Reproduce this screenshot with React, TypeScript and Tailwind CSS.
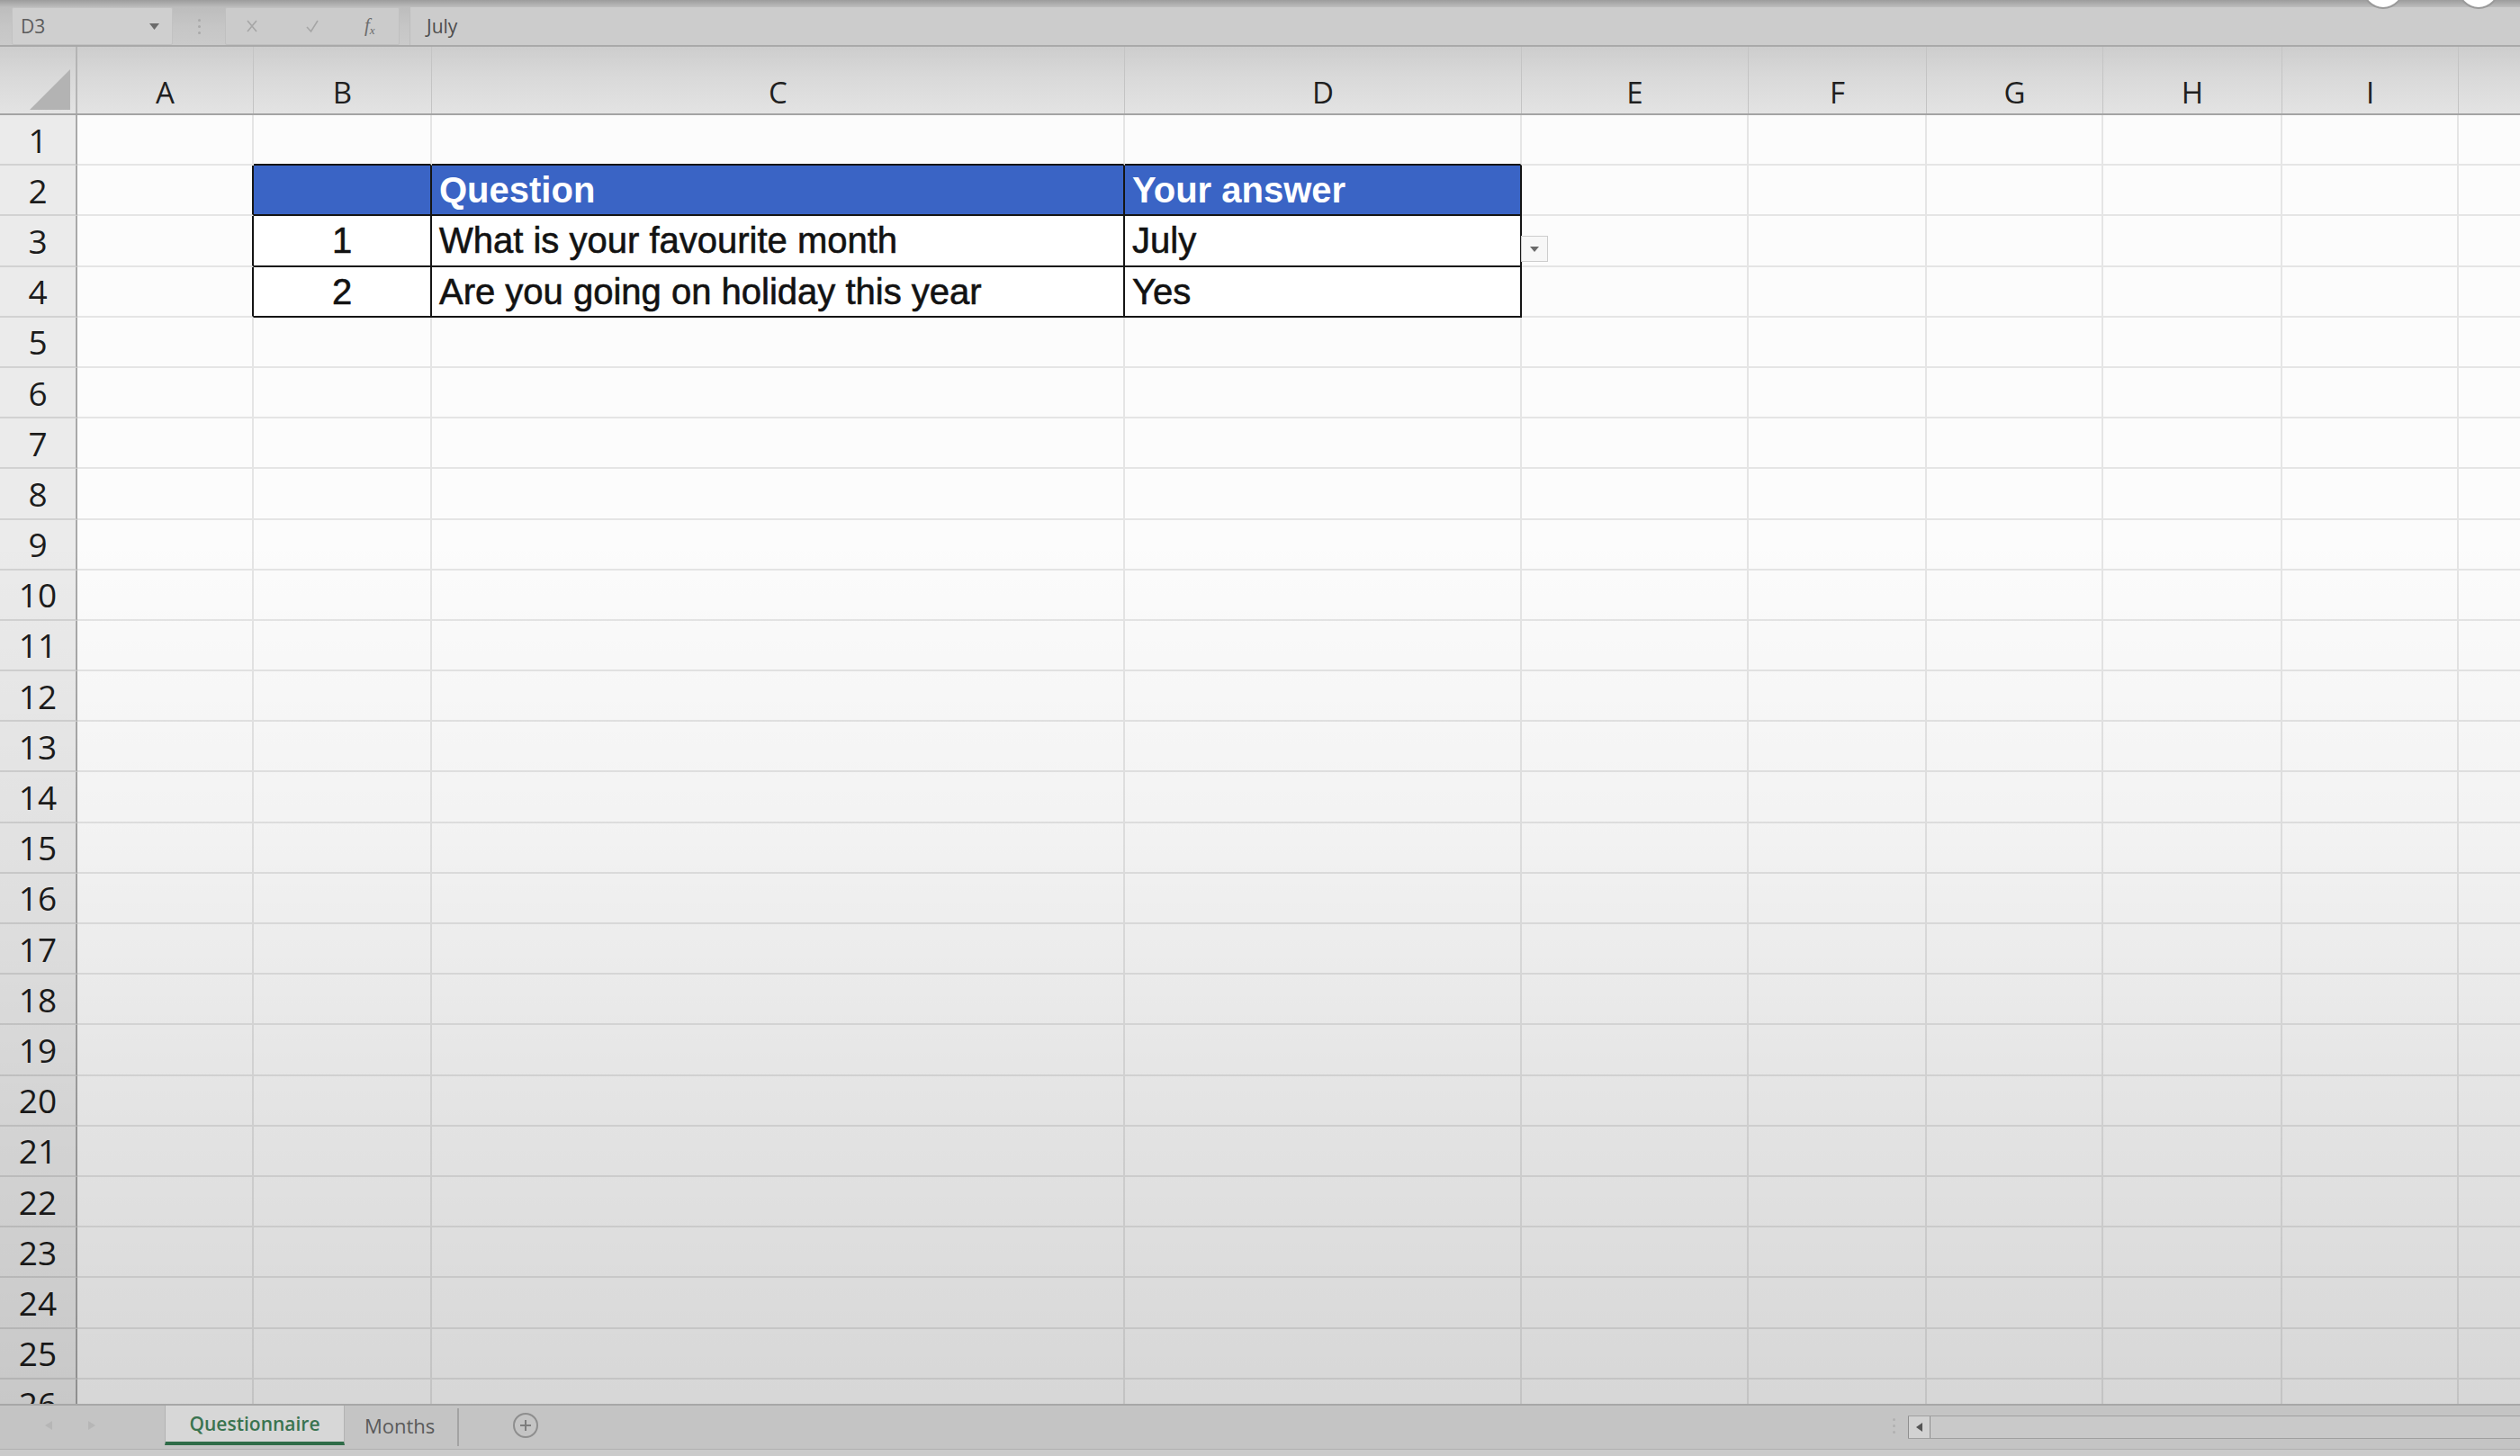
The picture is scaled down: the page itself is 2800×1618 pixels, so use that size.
import React from "react";

const GRID =
  "grid grid-cols-[86px_196px_198px_770px_441px_252px_198px_196px_199px_196px_196px]";
const LETTERS = ["A", "B", "C", "D", "E", "F", "G", "H", "I", "J"];
const ROWS = Array.from({ length: 26 }, (_, i) => i + 1);

// keys are "row-col", col 0 = A
type Kind = "head" | "num" | "body";
const TABLE: Record<string, { text: string; kind: Kind }> = {
  "2-1": { text: "", kind: "head" },
  "2-2": { text: "Question", kind: "head" },
  "2-3": { text: "Your answer", kind: "head" },
  "3-1": { text: "1", kind: "num" },
  "3-2": { text: "What is your favourite month", kind: "body" },
  "3-3": { text: "July", kind: "body" },
  "4-1": { text: "2", kind: "num" },
  "4-2": { text: "Are you going on holiday this year", kind: "body" },
  "4-3": { text: "Yes", kind: "body" },
};

function borders(r: number, c: number) {
  const inTable = r >= 2 && r <= 4 && c >= 1 && c <= 3;
  const right =
    inTable || (c === 0 && r >= 2 && r <= 4) ? "border-r-[#151515]" : "border-r-black/[0.09]";
  const bottom =
    inTable || (r === 1 && c >= 1 && c <= 3) ? "border-b-[#151515]" : "border-b-black/[0.09]";
  return `border-r-2 border-b-2 ${right} ${bottom}`;
}

function FormulaBar() {
  return (
    <div className="h-[52px] shrink-0 flex items-start pt-[8px] border-b-2 border-[#a9a9a9] bg-[linear-gradient(to_bottom,#9c9c9c_0px,#bdbdbd_8px,#c6c6c6_30px,#cacaca_100%)] font-['Open_Sans',sans-serif]">
      <div className="ml-[13px] w-[179px] h-[42px] flex items-center justify-between pl-[9px] pr-[14px] bg-[#cfcfcf] border border-[#c2c2c2] rounded-[2px]">
        <span className="text-[21px] text-[#5c5c5c] leading-none">D3</span>
        <svg width="11" height="7" viewBox="0 0 11 7">
          <path d="M0 0 L11 0 L5.5 7 Z" fill="#6b6b6b" />
        </svg>
      </div>
      <div className="w-[58px] h-[42px] flex flex-col items-center justify-center gap-[4px]">
        <span className="w-[3px] h-[3px] rounded-full bg-[#a9a9a9]" />
        <span className="w-[3px] h-[3px] rounded-full bg-[#a9a9a9]" />
        <span className="w-[3px] h-[3px] rounded-full bg-[#a9a9a9]" />
      </div>
      <div className="w-[194px] h-[42px] flex items-center px-[20px] gap-[49px] bg-[#cbcbcb] border border-[#c0c0c0] rounded-[2px]">
        <svg width="18" height="18" viewBox="0 0 18 18">
          <path d="M4 3 L14 15 M14 3 L4 15" stroke="#a6a6a6" strokeWidth="1.6" fill="none" />
        </svg>
        <svg width="18" height="18" viewBox="0 0 18 18">
          <path d="M3 10 L7.5 15 L15 3" stroke="#a6a6a6" strokeWidth="1.6" fill="none" />
        </svg>
        <span className="w-[18px] text-[21px] leading-none italic text-[#6c6c6c] font-['Liberation_Serif',serif]">
          f<span className="text-[13px] align-[-3px]">x</span>
        </span>
      </div>
      <div className="ml-[11px] flex-1 h-[42px] flex items-center pl-[18px] bg-[#cccccc] border-l border-[#bdbdbd]">
        <span className="text-[21px] text-[#4d4d4d] leading-none">July</span>
      </div>
    </div>
  );
}

function ColumnHeader() {
  return (
    <div
      className={`${GRID} h-[76px] shrink-0 border-b-2 border-[#a4a4a4] bg-[linear-gradient(to_bottom,#cdcdcd,#d9d9d9_45%,#e3e3e3)] font-['Open_Sans',sans-serif]`}
    >
      <div className="flex items-end justify-end pr-[6px] pb-[4px] border-r-2 border-[#b4b4b4]">
        <svg width="45" height="45" viewBox="0 0 45 45">
          <polygon points="45,0 45,45 0,45" fill="#b3b3b3" />
        </svg>
      </div>
      {LETTERS.map((l) => (
        <div
          key={l}
          className="flex items-center justify-center pt-[26px] border-r border-[#c4c4c4] text-[33px] leading-none text-[#1f1f1f]"
        >
          {l}
        </div>
      ))}
    </div>
  );
}

function Row({ r }: { r: number }) {
  return (
    <div className={`${GRID} h-[56.2px] shrink-0`}>
      <div className="flex items-center justify-center bg-[#ebebeb] border-r-2 border-b-2 border-r-[#a8a8a8] border-b-[#d2d2d2] font-['Open_Sans',sans-serif] text-[37px] leading-none text-[#1c1c1c]">
        {r}
      </div>
      {LETTERS.map((l, c) => {
        const cell = TABLE[`${r}-${c}`];
        const base = `relative flex items-center min-w-0 ${borders(r, c)}`;
        if (!cell) return <div key={l} className={base} />;
        const tone =
          cell.kind === "head"
            ? "bg-[#3a64c5] text-white font-bold pl-[8px]"
            : cell.kind === "num"
            ? "bg-white text-[#121212] justify-center [-webkit-text-stroke:0.6px_#121212]"
            : "bg-white text-[#121212] pl-[8px] [-webkit-text-stroke:0.6px_#121212]";
        return (
          <div
            key={l}
            className={`${base} ${tone} font-['Liberation_Sans',Arial,sans-serif] text-[40px] leading-none whitespace-nowrap`}
          >
            {cell.text}
            {r === 3 && c === 3 && (
              <div className="absolute left-[calc(100%+1px)] top-[22px] z-10 w-[30px] h-[29px] flex items-center justify-center bg-[#f7f7f7] border border-[#cdcdcd]">
                <svg width="10" height="6" viewBox="0 0 10 6">
                  <path d="M0 0 L10 0 L5 6 Z" fill="#6a6a6a" />
                </svg>
              </div>
            )}
          </div>
        );
      })}
    </div>
  );
}

function TabBar() {
  return (
    <div className="h-[50px] shrink-0 flex items-start border-t-2 border-[#a7a7a7] bg-[#c4c4c4] font-['Open_Sans',sans-serif]">
      <div className="w-[183px] h-[44px] flex items-center">
        <svg className="ml-[50px]" width="8" height="10" viewBox="0 0 8 10">
          <path d="M8 0 L0 5 L8 10 Z" fill="#b6b6b6" />
        </svg>
        <svg className="ml-[40px]" width="8" height="10" viewBox="0 0 8 10">
          <path d="M0 0 L8 5 L0 10 Z" fill="#b6b6b6" />
        </svg>
      </div>
      <div className="w-[200px] h-[44px] flex items-center justify-center bg-[#d7d7d7] border-x border-[#b3b3b3] border-b-4 border-b-[#2f6c48] text-[21px] font-semibold text-[#3a7450] leading-none">
        Questionnaire
      </div>
      <div className="ml-[22px] h-[44px] flex items-center text-[22px] text-[#5a5a5a] leading-none">
        Months
      </div>
      <div className="ml-[25px] mt-[3px] w-[2px] h-[42px] bg-[#a3a3a3]" />
      <div className="ml-[60px] h-[44px] flex items-center">
        <div className="w-[28px] h-[28px] rounded-full border-2 border-[#8e8e8e] flex items-center justify-center">
          <svg width="14" height="14" viewBox="0 0 14 14">
            <path d="M7 1 L7 13 M1 7 L13 7" stroke="#7d7d7d" strokeWidth="2" />
          </svg>
        </div>
      </div>
      <div className="flex-1" />
      <div className="w-[31px] h-[44px] flex flex-col items-center justify-center gap-[4px]">
        <span className="w-[3px] h-[3px] rounded-full bg-[#b0b0b0]" />
        <span className="w-[3px] h-[3px] rounded-full bg-[#b0b0b0]" />
        <span className="w-[3px] h-[3px] rounded-full bg-[#b0b0b0]" />
      </div>
      <div className="w-[680px] mt-[11px] h-[26px] flex border-y border-[#a0a0a0] bg-[#c9c9c9]">
        <div className="w-[25px] h-full flex items-center justify-center border-x border-[#8f8f8f] bg-[#d2d2d2]">
          <svg width="7" height="10" viewBox="0 0 7 10">
            <path d="M7 0 L0 5 L7 10 Z" fill="#555" />
          </svg>
        </div>
        <div className="flex-1" />
      </div>
    </div>
  );
}

export default function App() {
  return (
    <div className="relative w-[2800px] h-[1618px] overflow-hidden flex flex-col bg-[#c8c8c8]">
      <FormulaBar />
      <div className="relative h-[1508px] shrink-0 flex flex-col overflow-hidden bg-[#fcfcfc]">
        <ColumnHeader />
        {ROWS.map((r) => (
          <Row key={r} r={r} />
        ))}
        <div className="pointer-events-none absolute inset-0 bg-[linear-gradient(to_bottom,transparent_0%,transparent_36%,rgba(0,0,0,0.04)_58%,rgba(0,0,0,0.1)_80%,rgba(0,0,0,0.15)_100%)]" />
      </div>
      <TabBar />
      <div className="flex-1 border-t border-[#b0b0b0] bg-[#cbcbcb]" />
      <div className="absolute left-[2625px] top-[-36px] w-[46px] h-[46px] rounded-full bg-white border-2 border-[#9a9a9a]" />
      <div className="absolute left-[2731px] top-[-36px] w-[46px] h-[46px] rounded-full bg-white border-2 border-[#9a9a9a]" />
    </div>
  );
}
